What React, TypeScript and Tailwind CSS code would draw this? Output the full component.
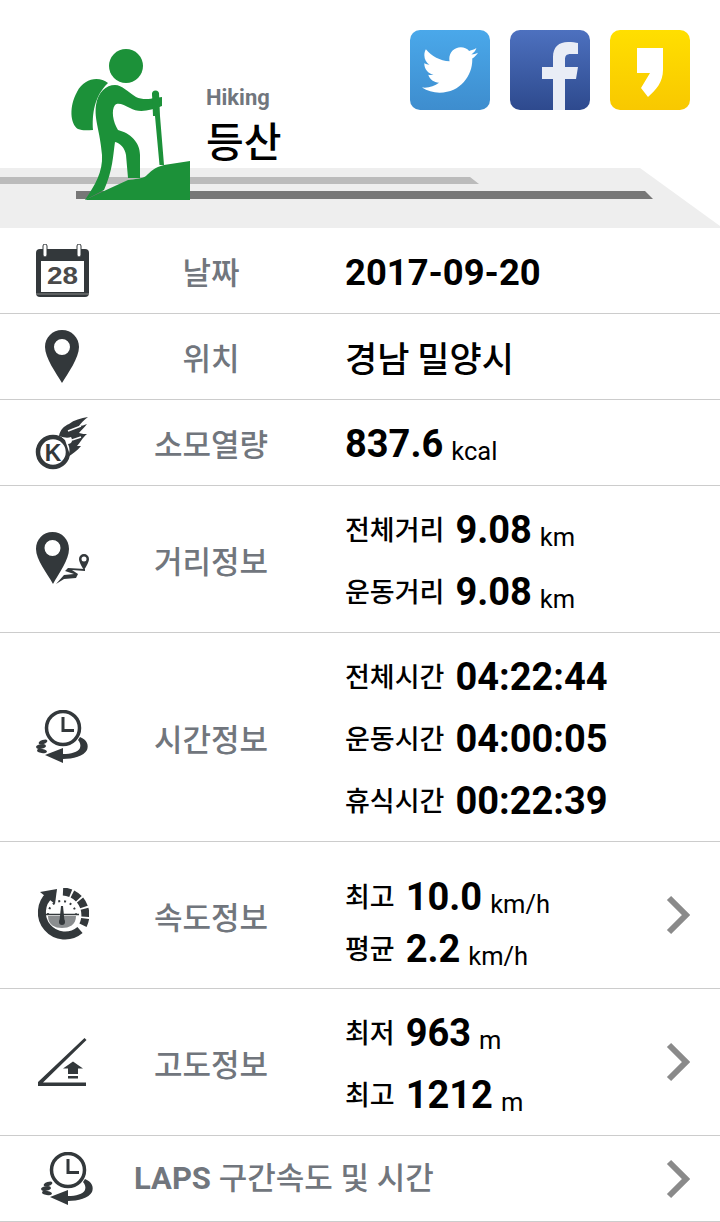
import React from "react";
import { FaTwitter } from "react-icons/fa";

const D = "#33383b";
const R = { fontFamily: "Roboto, 'Noto Sans CJK KR', sans-serif" };

const Hiker = () => (
  <svg width="130" height="160" viewBox="65 45 130 160" fill="#1c9139">
    <circle cx="126" cy="66" r="17" />
    <path d="M108 83C99 76 84 78 77 92C69 106 70 124 78 129C83 131 88 130 93 130C92 115 94 96 108 83Z" />
    <path d="M115 85C122 85 128 92 136 97C142 100 150 99 155 98L162 97L162 106C150 111 138 113 130 108C124 105 118 102 115 105C111 110 113 122 118 130C130 133 140 142 140 155L140 178L128 178L126 155C125 148 120 143 115 142C113 155 113 170 104 190L85 200C95 185 103 172 102 155C100 130 94 120 96 105C98 92 106 85 115 85Z" />
    <circle cx="155.500" cy="94" r="3.500" />
    <path d="M152 93H159L160 116L164 165H159.500L155 116H153Z" />
    <path d="M85 200H190V161L164 165C155 167 150 172 146 176C142 179 135 179 128 180L104 191Z" />
  </svg>
);

const Road = () => (
  <svg className="absolute left-0 top-[168px]" width="720" height="60" viewBox="0 168 720 60">
    <path d="M0 168H640L720 226V228H0Z" fill="#eeeeee" />
    <path d="M0 177H470L479 184H0Z" fill="#bbbbbb" />
    <path d="M76 191H645L653 199H76Z" fill="#777777" />
  </svg>
);

const Facebook = () => (
  <svg width="80" height="80" viewBox="0 0 80 80">
    <path d="M43 80V49H32V37H43V27C43 17 49 12 58 12C62 12 66 12.500 68 13V24H61C56 24 55 26 55 30V37H68L66 49H55V80Z" fill="#e9edf6" />
  </svg>
);

const Kakao = () => (
  <svg width="80" height="80" viewBox="0 0 80 80">
    <path d="M27 18H53V40C53 52 46 60 38 67L31 58L40 43H27Z" fill="#fff" />
  </svg>
);

const Calendar = () => (
  <svg width="54" height="54" viewBox="0 0 54 54" fill={D}>
    <rect x="1" y="5" width="53" height="48" rx="4" />
    <rect x="6" y="17" width="43" height="31" fill="#fff" />
    <rect x="1" y="49.500" width="53" height="1" fill="#888" />
    <rect x="8" y="0" width="4" height="13" rx="2" fill="#fff" stroke={D} strokeWidth="1" />
    <rect x="42" y="0" width="4" height="13" rx="2" fill="#fff" stroke={D} strokeWidth="1" />
    <text x="27.500" y="40" textAnchor="middle" fontSize="24" fontWeight="700" textLength="31" lengthAdjust="spacingAndGlyphs" fontFamily="'Liberation Sans', sans-serif" fill="#4a4a4a">28</text>
  </svg>
);

const Pin = () => (
  <svg width="34" height="54" viewBox="0 0 34 54">
    <path fillRule="evenodd" fill={D} d="M17 0C7.500 0 0 7.500 0 17C0 28 11 43 17 53C23 43 34 28 34 17C34 7.500 26.500 0 17 0ZM17 9A8 8 0 1 1 17 25A8 8 0 0 1 17 9Z" />
  </svg>
);

const Kcal = () => (
  <svg width="54" height="54" viewBox="0 0 54 54" fill={D}>
    <circle cx="18" cy="36" r="15" fill="none" stroke={D} strokeWidth="4.500" />
    <text x="18" y="44.500" textAnchor="middle" fontSize="23" fontWeight="700" fontFamily="'Liberation Sans', sans-serif" fill={D}>K</text>
    <path fill="#fff" d="M20 15L36 8L46 28L36 42L30 24Z" />
    <path d="M24 20C25 14 29 10 34 8C39 4 46 2 53 1C49 4 46 7 44 10C47 10 49 9 52 8C49 12 46 14 44 17C47 18 50 18 52 18C47 22 45 27 42 30C44 30 45 30 46 30C42 35 37 38 33 41C35 36 35 32 33 28C37 28 38 24 36 21C33 22 30 22 24 20Z" />
    <path d="M33 15L46 10M37 24L46 21" stroke="#fff" strokeWidth="1.500" fill="none" />
  </svg>
);

const Route = () => (
  <svg width="54" height="54" viewBox="0 0 54 54" fill={D}>
    <path fillRule="evenodd" d="M17.500 0C8 0 1 7.500 1 17C1 28 12 41 18 52C24 41 34 28 34 17C34 7.500 27 0 17.500 0ZM17.500 8A8 8 0 1 1 17.500 24A8 8 0 0 1 17.500 8Z" />
    <path d="M21 52L29 43L39 42L30 39L33 36L50 37V39L37 38L43 42L41 46L29 47Z" />
    <path fillRule="evenodd" d="M49 22A5 5 0 0 0 44 27C44 30 47 35 49 38C51 35 54 30 54 27A5 5 0 0 0 49 22ZM49 24.500A2.500 2.500 0 1 1 49 29.500A2.500 2.500 0 0 1 49 24.500Z" />
  </svg>
);

const ClockSpin = () => (
  <svg width="54" height="54" viewBox="0 0 54 54" fill={D}>
    <circle cx="28" cy="18" r="16.500" fill="none" stroke={D} strokeWidth="3.500" />
    <path d="M26.500 7H29.500V19H39V22H26.500Z" />
    <path d="M45 27C52 30 54 35 52 40C49 46 38 49 28 49L28 44C36 44 43 42 45 38C46 35 45 32 43 30Z" />
    <path d="M10 45L28 38V53Z" />
    <ellipse cx="8" cy="32" rx="4.500" ry="2" transform="rotate(-20 8 32)" />
    <ellipse cx="6" cy="36.500" rx="5" ry="2.200" transform="rotate(-10 6 36.500)" />
    <ellipse cx="7" cy="41" rx="5" ry="2" transform="rotate(10 7 41)" />
  </svg>
);

const Gauge = () => (
  <svg width="54" height="54" viewBox="0 0 54 54" fill="none">
    <path d="M15 6.800A23 23 0 1 0 45 42" stroke={D} strokeWidth="8" />
    <path d="M5 4L22 1L20 16Z" fill={D} />
    <path d="M28 3.500A23.500 23.500 0 0 1 48 37.300" stroke={D} strokeWidth="8" strokeDasharray="8 1.800" />
    <path d="M13 27A14 14 0 0 1 41 27" stroke={D} strokeWidth="2" strokeDasharray="2 4" />
    <path d="M13 28H41C41 37 34 40 27 40C20 40 13 37 13 28Z" fill="#8a8d8f" />
    <path d="M10 26.500H44" stroke={D} strokeWidth="1.500" />
    <path d="M26 18H28L29.500 33H24.500Z" fill={D} />
    <circle cx="27" cy="34" r="3" fill={D} />
  </svg>
);

const Slope = () => (
  <svg width="50" height="50" viewBox="0 0 50 50" fill={D}>
    <path d="M47.500 1L1 45V49H49V45.500H6L49.500 3Z" />
    <path d="M36 24.500L46 31.500H41V37H31V31.500H26Z" />
    <rect x="31" y="39" width="10" height="2.500" />
  </svg>
);

const Chevron = () => (
  <svg className="mr-[30px] shrink-0" width="24" height="40" viewBox="0 0 24 40" fill="none">
    <path d="M3 3L20 20L3 37" stroke="#8a8a8a" strokeWidth="6" />
  </svg>
);

function Row({ h, icon, label, children, chevron }: { h: string; icon: React.ReactNode; label: string; children: React.ReactNode; chevron?: boolean }) {
  return (
    <div className={`flex items-center border-b border-[#cccccc] ${h}`}>
      <div className="flex w-[124px] shrink-0 justify-center">{icon}</div>
      <div className="w-[174px] shrink-0 text-center text-[31px] font-medium leading-none text-[#71767d]">{label}</div>
      <div className="ml-[47px] flex-1 text-black">{children}</div>
      {chevron && <Chevron />}
    </div>
  );
}

function Metric({ label, value, unit, h = "h-[62px] leading-[62px]" }: { label: string; value: string; unit?: string; h?: string }) {
  return (
    <div className={`flex items-baseline ${h}`}>
      <span className="-translate-y-px text-[27px] font-medium">{label}</span>
      <span className="ml-[11px] translate-y-[2px] text-[38px] font-bold" style={R}>{value}</span>
      {unit && <span className="ml-[8px] translate-y-[5px] text-[25.500px]" style={R}>{unit}</span>}
    </div>
  );
}

export default function App() {
  return (
    <div className="w-[720px] bg-white" style={{ fontFamily: "'Noto Sans CJK KR',sans-serif" }}>
      <header className="relative h-[228px] overflow-hidden">
        <Road />
        <div className="absolute left-[65px] top-[45px]"><Hiker /></div>
        <div className="absolute left-[206px] top-[84px]">
          <div className="text-[22px] font-bold leading-[28px] text-[#71767d]" style={R}>Hiking</div>
          <div className="mt-[2px] text-[41px] font-medium leading-[50px] text-black">등산</div>
        </div>
        <div className="relative flex justify-end gap-5 pr-[30px] pt-[30px]">
          <div className="flex h-20 w-20 items-center justify-center rounded-[10px] bg-gradient-to-b from-[#4aa8ea] to-[#3e8dce] text-white"><FaTwitter size={56} /></div>
          <div className="h-20 w-20 overflow-hidden rounded-[10px] bg-gradient-to-b from-[#4d71bf] to-[#2e4a8e]"><Facebook /></div>
          <div className="h-20 w-20 overflow-hidden rounded-[10px] bg-gradient-to-b from-[#ffdf00] to-[#f8c800]"><Kakao /></div>
        </div>
      </header>
      <Row h="h-[86px]" icon={<Calendar />} label="날짜">
        <div className="translate-y-[3px] text-[36.400px] font-bold leading-none" style={R}>2017-09-20</div>
      </Row>
      <Row h="h-[86px]" icon={<Pin />} label="위치">
        <div className="text-[35px] font-medium leading-none">경남 밀양시</div>
      </Row>
      <Row h="h-[86px]" icon={<Kcal />} label="소모열량">
        <div className="flex items-baseline" style={R}><span className="translate-y-[2px] text-[38px] font-bold">837.6</span><span className="ml-[8px] translate-y-[5px] text-[25.500px]">kcal</span></div>
      </Row>
      <Row h="h-[147px]" icon={<Route />} label="거리정보">
        <Metric label="전체거리" value="9.08" unit="km" />
        <Metric label="운동거리" value="9.08" unit="km" />
      </Row>
      <Row h="h-[209px]" icon={<ClockSpin />} label="시간정보">
        <Metric label="전체시간" value="04:22:44" />
        <Metric label="운동시간" value="04:00:05" />
        <Metric label="휴식시간" value="00:22:39" />
      </Row>
      <Row h="h-[147px]" icon={<Gauge />} label="속도정보" chevron>
        <div className="pt-[11px]">
          <Metric h="h-[52px] leading-[52px]" label="최고" value="10.0" unit="km/h" />
          <Metric h="h-[52px] leading-[52px]" label="평균" value="2.2" unit="km/h" />
        </div>
      </Row>
      <Row h="h-[147px]" icon={<Slope />} label="고도정보" chevron>
        <Metric label="최저" value="963" unit="m" />
        <Metric label="최고" value="1212" unit="m" />
      </Row>
      <div className="flex h-[86px] items-center border-b border-[#cccccc]">
        <div className="flex w-[134px] shrink-0 justify-center"><ClockSpin /></div>
        <div className="flex-1 text-[31px] font-medium leading-none text-[#71767d]" style={R}><span className="font-bold">LAPS</span> 구간속도 및 시간</div>
        <Chevron />
      </div>
    </div>
  );
}
